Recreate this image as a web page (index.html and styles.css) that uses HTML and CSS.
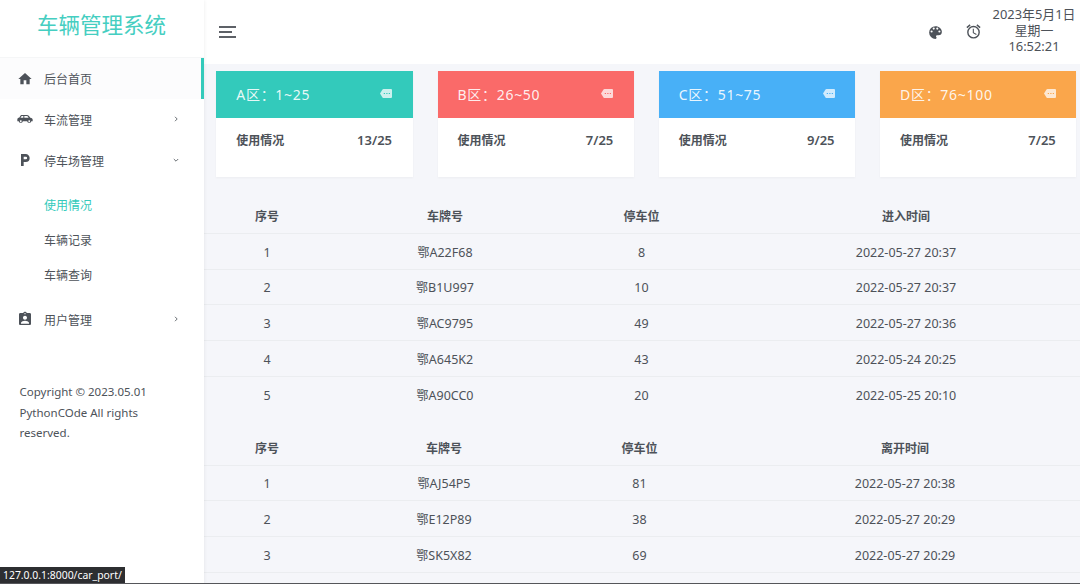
FILE: index.html
```html
<!DOCTYPE html>
<html lang="zh">
<head>
  <meta charset="UTF-8" />
  <title>车辆管理系统</title>
  <meta name="viewport" content="width=device-width, initial-scale=1.0" />
  <link rel="stylesheet" href="styles.css">
</head>
<body>

  <div class="layout">
    <!-- 左侧导航 -->
    <aside class="sidebar">
      <div class="sidebar-header">车辆管理系统</div>
      <ul class="nav">
        <li class="nav-item active">
          <svg class="nav-icon" viewBox="0 0 24 24"><path d="M10,20V14H14V20H19V12H22L12,3L2,12H5V20H10Z"/></svg>
          <span>后台首页</span>
        </li>
        <li class="nav-item">
          <svg class="nav-icon" viewBox="0 0 24 24"><path fill-rule="evenodd" d="M6 6H15C17 6 18.500 8 20 10C22.500 10.300 23.500 11.500 23.500 13V15.500H21.500A3.200 3.200 0 0 1 15.200 15.500H8.800A3.200 3.200 0 0 1 2.500 15.500H.5V12.500C.5 11 1.500 10 3.200 10L6 6ZM7 7.500L5.200 10H9.500V7.500ZM11 7.500V10H17.500L15.500 7.500ZM5.600 14A1.300 1.300 0 1 0 5.700 14ZM18.300 14A1.300 1.300 0 1 0 18.400 14Z"/></svg>
          <span>车流管理</span>
          <svg class="arrow" viewBox="0 0 6 6"><path d="M2 .8L4.200 3L2 5.200"/></svg>
        </li>
        <li class="nav-item">
          <svg class="nav-icon" viewBox="0 0 24 24"><path d="M13.200,11H10V7H13.200A2,2 0 0,1 15.200,9A2,2 0 0,1 13.200,11M13,3H6V21H10V15H13A6,6 0 0,0 19,9C19,5.680 16.310,3 13,3Z"/></svg>
          <span>停车场管理</span>
          <svg class="arrow" viewBox="0 0 6 6"><path d="M.8 2L3 4.200L5.200 2"/></svg>
        </li>
        <li>
          <ul class="subnav">
            <li class="current">使用情况</li>
            <li>车辆记录</li>
            <li>车辆查询</li>
          </ul>
        </li>
        <li class="nav-item">
          <svg class="nav-icon" viewBox="0 0 24 24"><path d="M19 3h-4.180C14.400 1.840 13.300 1 12 1c-1.300 0-2.400.84-2.820 2H5c-1.100 0-2 .9-2 2v14c0 1.100.9 2 2 2h14c1.100 0 2-.9 2-2V5c0-1.100-.9-2-2-2zm-7 0c.55 0 1 .45 1 1s-.45 1-1 1-1-.45-1-1 .45-1 1-1zm0 4c1.660 0 3 1.340 3 3s-1.340 3-3 3-3-1.340-3-3 1.340-3 3-3zm6 12H6v-1.400c0-2 4-3.100 6-3.100s6 1.100 6 3.100V19z"/></svg>
          <span>用户管理</span>
          <svg class="arrow" viewBox="0 0 6 6"><path d="M2 .8L4.200 3L2 5.200"/></svg>
        </li>
      </ul>
      <p class="copyright">Copyright © 2023.05.01<br>PythonCOde All rights<br>reserved.</p>
    </aside>

    <div class="page">
      <!-- 顶部栏 -->
      <header class="topbar">
        <div class="toggler"><span></span><span></span><span></span></div>
        <div class="topbar-right">
          <svg class="top-icon palette" viewBox="0 0 24 24"><path d="M17.500,12A1.500,1.500 0 0,1 16,10.500A1.500,1.500 0 0,1 17.500,9A1.500,1.500 0 0,1 19,10.500A1.500,1.500 0 0,1 17.500,12M14.500,8A1.500,1.500 0 0,1 13,6.500A1.500,1.500 0 0,1 14.500,5A1.500,1.500 0 0,1 16,6.500A1.500,1.500 0 0,1 14.500,8M9.500,8A1.500,1.500 0 0,1 8,6.500A1.500,1.500 0 0,1 9.500,5A1.500,1.500 0 0,1 11,6.500A1.500,1.500 0 0,1 9.500,8M6.500,12A1.500,1.500 0 0,1 5,10.500A1.500,1.500 0 0,1 6.500,9A1.500,1.500 0 0,1 8,10.500A1.500,1.500 0 0,1 6.500,12M12,3A9,9 0 0,0 3,12A9,9 0 0,0 12,21A1.500,1.500 0 0,0 13.500,19.500C13.500,19.110 13.350,18.760 13.110,18.500C12.880,18.230 12.730,17.880 12.730,17.500A1.500,1.500 0 0,1 14.230,16H16A5,5 0 0,0 21,11C21,6.580 16.970,3 12,3Z"/></svg>
          <svg class="top-icon alarm" viewBox="0 0 24 24"><path d="M12,20A7,7 0 0,1 5,13A7,7 0 0,1 12,6A7,7 0 0,1 19,13A7,7 0 0,1 12,20M12,4A9,9 0 0,0 3,13A9,9 0 0,0 12,22A9,9 0 0,0 21,13A9,9 0 0,0 12,4M12.500,8H11V14L15.750,16.850L16.500,15.620L12.500,13.250V8M7.880,3.390L6.600,1.860L2,5.710L3.290,7.240L7.880,3.390M22,5.720L17.400,1.860L16.110,3.390L20.710,7.250L22,5.720Z"/></svg>
          <div class="clock">2023年5月1日<br>星期一<br>16:52:21</div>
        </div>
      </header>

      <main class="content">
        <!-- 各区使用情况 -->
        <div class="cards">
          <div class="card">
            <div class="card-header green"><span>A区：1~25</span><svg class="tag" viewBox="0 0 24 18"><path fill-rule="evenodd" d="M7 0H22A2 2 0 0 1 24 2V16A2 2 0 0 1 22 18H7Q5.800 18 5 17L0 9L5 1Q5.800 0 7 0ZM7.500 8V10.200H10V8ZM12.500 8V10.200H15V8ZM17.500 8V10.200H20V8Z"/></svg></div>
            <div class="card-body"><span>使用情况</span><span class="count">13/25</span></div>
          </div>
          <div class="card">
            <div class="card-header red"><span>B区：26~50</span><svg class="tag" viewBox="0 0 24 18"><path fill-rule="evenodd" d="M7 0H22A2 2 0 0 1 24 2V16A2 2 0 0 1 22 18H7Q5.800 18 5 17L0 9L5 1Q5.800 0 7 0ZM7.500 8V10.200H10V8ZM12.500 8V10.200H15V8ZM17.500 8V10.200H20V8Z"/></svg></div>
            <div class="card-body"><span>使用情况</span><span class="count">7/25</span></div>
          </div>
          <div class="card">
            <div class="card-header blue"><span>C区：51~75</span><svg class="tag" viewBox="0 0 24 18"><path fill-rule="evenodd" d="M7 0H22A2 2 0 0 1 24 2V16A2 2 0 0 1 22 18H7Q5.800 18 5 17L0 9L5 1Q5.800 0 7 0ZM7.500 8V10.200H10V8ZM12.500 8V10.200H15V8ZM17.500 8V10.200H20V8Z"/></svg></div>
            <div class="card-body"><span>使用情况</span><span class="count">9/25</span></div>
          </div>
          <div class="card">
            <div class="card-header orange"><span>D区：76~100</span><svg class="tag" viewBox="0 0 24 18"><path fill-rule="evenodd" d="M7 0H22A2 2 0 0 1 24 2V16A2 2 0 0 1 22 18H7Q5.800 18 5 17L0 9L5 1Q5.800 0 7 0ZM7.500 8V10.200H10V8ZM12.500 8V10.200H15V8ZM17.500 8V10.200H20V8Z"/></svg></div>
            <div class="card-body"><span>使用情况</span><span class="count">7/25</span></div>
          </div>
        </div>

        <!-- 进入记录 -->
        <table class="records">
          <colgroup><col class="col-no"><col class="col-plate"><col class="col-port"><col></colgroup>
          <thead>
            <tr><th>序号</th><th>车牌号</th><th>停车位</th><th>进入时间</th></tr>
          </thead>
          <tbody>
            <tr><td>1</td><td><span class="han">鄂</span>A22F68</td><td>8</td><td>2022-05-27 20:37</td></tr>
            <tr><td>2</td><td><span class="han">鄂</span>B1U997</td><td>10</td><td>2022-05-27 20:37</td></tr>
            <tr><td>3</td><td><span class="han">鄂</span>AC9795</td><td>49</td><td>2022-05-27 20:36</td></tr>
            <tr><td>4</td><td><span class="han">鄂</span>A645K2</td><td>43</td><td>2022-05-24 20:25</td></tr>
            <tr><td>5</td><td><span class="han">鄂</span>A90CC0</td><td>20</td><td>2022-05-25 20:10</td></tr>
          </tbody>
        </table>

        <!-- 离开记录 -->
        <table class="records leave">
          <colgroup><col class="col-no"><col class="col-plate"><col class="col-port"><col></colgroup>
          <thead>
            <tr><th>序号</th><th>车牌号</th><th>停车位</th><th>离开时间</th></tr>
          </thead>
          <tbody>
            <tr><td>1</td><td><span class="han">鄂</span>AJ54P5</td><td>81</td><td>2022-05-27 20:38</td></tr>
            <tr><td>2</td><td><span class="han">鄂</span>E12P89</td><td>38</td><td>2022-05-27 20:29</td></tr>
            <tr><td>3</td><td><span class="han">鄂</span>SK5X82</td><td>69</td><td>2022-05-27 20:29</td></tr>
          </tbody>
        </table>
      </main>
    </div>
  </div>

  <div class="status-url"><span>127.0.0.1:8000/car_port/</span></div>

</body>
</html>
```
FILE: styles.css
```css
* {
  box-sizing: border-box;
}

body {
  margin: 0;
  font-family: "Noto Sans", "Noto Sans CJK SC", sans-serif;
  font-size: 12px;
  color: #4d5259;
  background-color: #f5f6fa;
  overflow: hidden;
}

ul {
  list-style: none;
  margin: 0;
  padding: 0;
}

.layout {
  display: flex;
  height: 584px;
}

/* 左侧导航 */
.sidebar {
  flex: none;
  width: 204px;
  background-color: #fff;
  box-shadow: 0 0 4px rgba(0,0,0,0.08);
  z-index: 2;
}

.sidebar-header {
  height: 58px;
  padding-right: 1px;
  border-bottom: 1px solid #f5f6f7;
  text-align: center;
  font-size: 21.5px;
  line-height: 50px;
  color: #45cec1;
}

.nav-item {
  display: flex;
  align-items: center;
  height: 41px;
  padding: 0 25px 0 17px;
}

.nav-item.active {
  padding-top: 1px;
  background-color: #fcfcfd;
  border-right: 3px solid #33cabb;
}

.nav-icon {
  width: 16px;
  height: 16px;
  margin-right: 11px;
  margin-top: -1px;
  fill: #4d5259;
}

.arrow {
  width: 6px;
  height: 6px;
  margin-left: auto;
  margin-top: -2px;
  fill: none;
  stroke: #6b7076;
}

.subnav {
  padding: 7px 0 6px 44px;
}

.subnav li {
  height: 35px;
  line-height: 35px;
}

.subnav .current {
  color: #33cabb;
}

.copyright {
  margin: 42px 0 0 19.5px;
  font-size: 11.5px;
  line-height: 20.5px;
}

/* 右侧 */
.page {
  flex: 1;
  min-width: 0;
}

.topbar {
  display: flex;
  justify-content: space-between;
  align-items: center;
  height: 64px;
  padding: 0 4px 0 15px;
  background-color: #fff;
}

.toggler {
  display: flex;
  flex-direction: column;
  gap: 3px;
}

.toggler span {
  width: 17px;
  height: 2px;
  background-color: #5d6167;
}

.toggler span:nth-child(2) {
  width: 13px;
}

.topbar-right {
  display: flex;
  align-items: center;
}

.top-icon {
  width: 17px;
  height: 17px;
  fill: #4d5259;
}

.palette {
  margin-right: 21px;
}

.alarm {
  margin-right: 10px;
  margin-top: -2px;
}

.clock {
  width: 84px;
  font-size: 12.9px;
  line-height: 16px;
  margin-top: -5px;
  text-align: center;
  white-space: nowrap;
}

.content {
  height: 520px;
  overflow: hidden;
}

.cards {
  display: grid;
  grid-template-columns: repeat(4, 1fr);
  gap: 25px;
  padding: 7px 3.7px 0 12.3px;
}

.card {
  height: 106px;
  background-color: #fff;
  box-shadow: 0 1px 2px rgba(0,0,0,0.04);
}

.card-header {
  display: flex;
  align-items: center;
  justify-content: space-between;
  height: 47px;
  padding: 0 20.5px 2px 20px;
  color: rgba(255,255,255,0.9);
  font-size: 14px;
  letter-spacing: 0.7px;
}

.green { background-color: #33cabb; }
.red { background-color: #fa6a69; }
.blue { background-color: #48b0f7; }
.orange { background-color: #faa64b; }

.tag {
  width: 12px;
  height: 9px;
  fill: #fff;
  opacity: 0.75;
}

.card-body {
  display: flex;
  justify-content: space-between;
  align-items: center;
  height: 43px;
  padding: 0 20.5px 0 20px;
  font-weight: 600;
}

.count {
  font-size: 13px;
}

/* 记录表格 */
.records {
  width: 885px;
  margin-top: 21px;
  table-layout: fixed;
  border-collapse: separate;
  border-spacing: 0;
  text-align: center;
}

.leave {
  margin-top: 17px;
}

.col-no { width: 126px; }
.col-plate { width: 230px; }
.col-port { width: 163px; }
.leave .col-plate { width: 228px; }

.records th,
.records td {
  height: 35.8px;
  padding: 3px 0 0;
  line-height: 20px;
  border-bottom: 1px solid #ebedf0;
}

.records th {
  font-weight: 600;
}

.records td {
  font-size: 12.5px;
}

.records:not(.leave) tbody tr:last-child td {
  border-bottom: none;
}

.han {
  font-size: 12px;
  line-height: 1;
}

/* 浏览器左下角链接提示 */
.status-url {
  position: fixed;
  left: 0;
  right: 0;
  bottom: 0;
  z-index: 10;
  display: flex;
  border-bottom: 1px solid #55565a;
}

.status-url span {
  width: 125px;
  height: 16px;
  padding-left: 3px;
  font-size: 10.4px;
  line-height: 17px;
  white-space: nowrap;
  color: #fff;
  background-color: #2d2e31;
}
```
